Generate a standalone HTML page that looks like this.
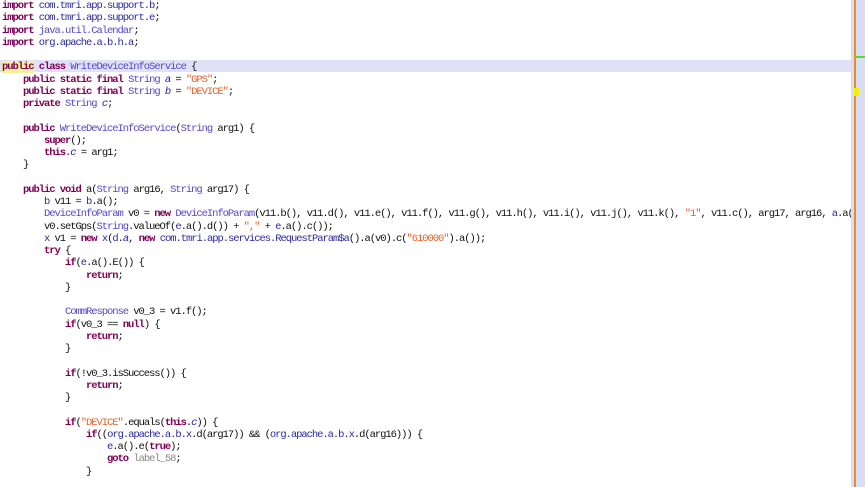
<!DOCTYPE html>
<html><head><style>
body{margin:0;width:865px;height:487px;background:#fff;overflow:hidden;position:relative;font-family:"Liberation Mono",monospace;}
.hl{position:absolute;left:0;top:60px;width:851px;height:12px;background:#e0e1f7;}
.yk{background:#f4f29a;}
pre{position:absolute;left:2px;top:0px;margin:0;font-size:10.5px;letter-spacing:-1.05px;line-height:12.25px;color:#111;font-family:"Liberation Mono",monospace;}
.k{color:#7f0055;font-weight:bold}
.t{color:#5646d0}
.p{color:#2a2aa6}
.s{color:#e8622a}
.f{color:#1e1ea8;font-style:italic}
.g{color:#888}
.bar{position:absolute;left:851px;top:0;width:14px;height:487px;background:#d8def3;}
.or{position:absolute;left:854px;top:0;width:2px;height:487px;background:#f08a24;}
.gr{position:absolute;left:855px;top:56px;width:10px;height:2px;background:#55dd33;}
.ye{position:absolute;left:854px;top:88px;width:5px;height:8px;background:#f2f200;}
</style></head><body>
<div class="hl"></div>
<pre><span class="k">import</span> <span class="p">com.tmri.app.support.b</span>;
<span class="k">import</span> <span class="p">com.tmri.app.support.e</span>;
<span class="k">import</span> <span class="t">java.util.Calendar</span>;
<span class="k">import</span> <span class="p">org.apache.a.b.h.a</span>;

<span class="k"><span class="yk">public</span> class</span> <span class="t">WriteDeviceInfoService</span> {
    <span class="k">public static final</span> <span class="t">String</span> <span class="f">a</span> = <span class="s">"GPS"</span>;
    <span class="k">public static final</span> <span class="t">String</span> <span class="f">b</span> = <span class="s">"DEVICE"</span>;
    <span class="k">private</span> <span class="t">String</span> <span class="f">c</span>;

    <span class="k">public</span> <span class="t">WriteDeviceInfoService</span>(<span class="t">String</span> arg1) {
        <span class="k">super</span>();
        <span class="k">this</span>.<span class="f">c</span> = arg1;
    }

    <span class="k">public void</span> a(<span class="t">String</span> arg16, <span class="t">String</span> arg17) {
        <span class="p">b</span> v11 = <span class="p">b</span>.a();
        <span class="t">DeviceInfoParam</span> v0 = <span class="k">new</span> <span class="t">DeviceInfoParam</span>(v11.b(), v11.d(), v11.e(), v11.f(), v11.g(), v11.h(), v11.i(), v11.j(), v11.k(), <span class="s">"1"</span>, v11.c(), arg17, arg16, <span class="p">a</span>.a(
        v0.setGps(<span class="t">String</span>.valueOf(<span class="p">e</span>.a().d()) + <span class="s">","</span> + <span class="p">e</span>.a().c());
        <span class="p">x</span> v1 = <span class="k">new</span> <span class="p">x</span>(<span class="p">d</span>.<span class="f">a</span>, <span class="k">new</span> <span class="p">com.tmri.app.services.RequestParam$a</span>().a(v0).c(<span class="s">"610000"</span>).a());
        <span class="k">try</span> {
            <span class="k">if</span>(<span class="p">e</span>.a().E()) {
                <span class="k">return</span>;
            }

            <span class="t">CommResponse</span> v0_3 = v1.f();
            <span class="k">if</span>(v0_3 == <span class="k">null</span>) {
                <span class="k">return</span>;
            }

            <span class="k">if</span>(!v0_3.isSuccess()) {
                <span class="k">return</span>;
            }

            <span class="k">if</span>(<span class="s">"DEVICE"</span>.equals(<span class="k">this</span>.<span class="f">c</span>)) {
                <span class="k">if</span>((<span class="p">org.apache.a.b.x</span>.d(arg17)) &amp;&amp; (<span class="p">org.apache.a.b.x</span>.d(arg16))) {
                    <span class="p">e</span>.a().e(<span class="k">true</span>);
                    <span class="k">goto</span> <span class="g">label_58</span>;
                }
</pre>
<div class="bar"></div><div class="or"></div><div class="gr"></div><div class="ye"></div>
</body></html>
